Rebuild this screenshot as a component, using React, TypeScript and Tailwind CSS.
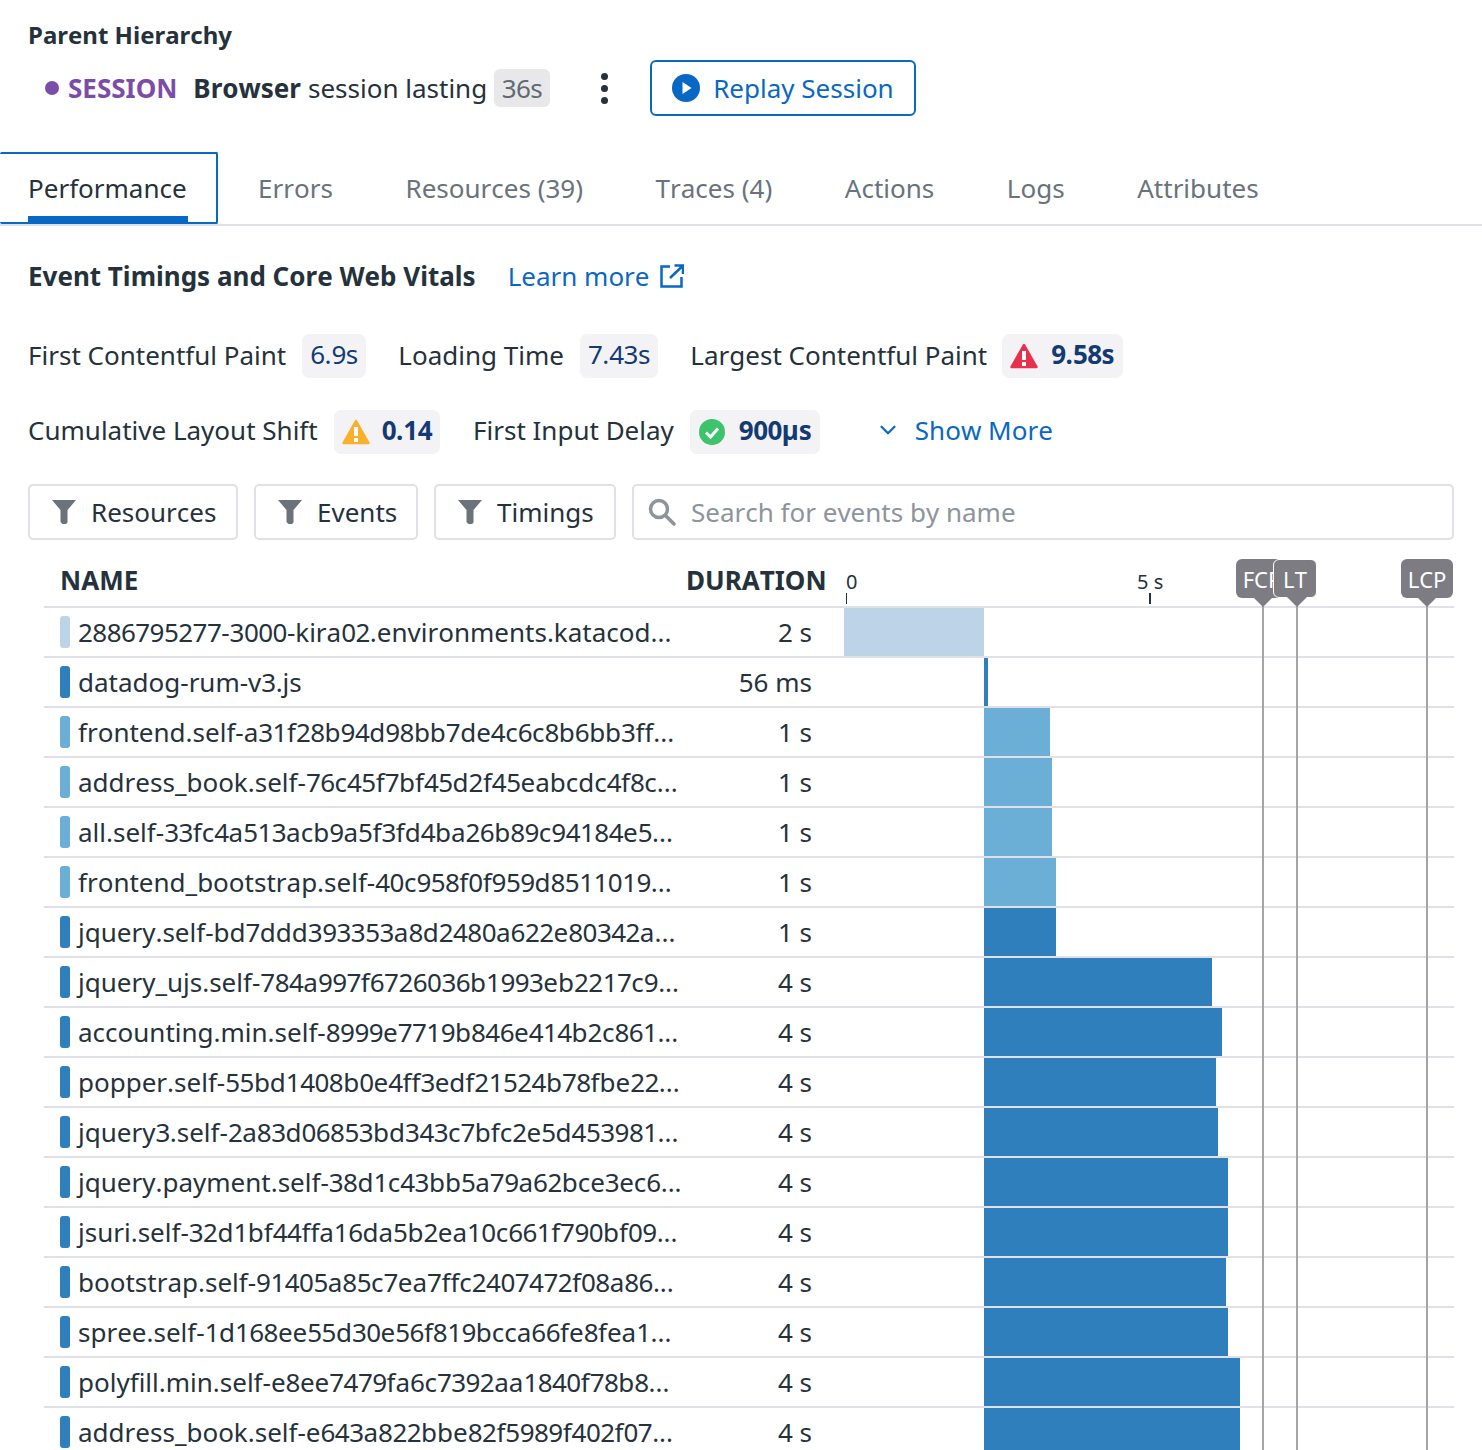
import React from "react";
import { ChevronDown } from "lucide-react";

const rows = [
  { name: "2886795277-3000-kira02.environments.katacod...", dur: "2 s", color: "#bdd4e8", start: 0, width: 140 },
  { name: "datadog-rum-v3.js", dur: "56 ms", color: "#2f7fbd", start: 140, width: 4 },
  { name: "frontend.self-a31f28b94d98bb7de4c6c8b6bb3ff...", dur: "1 s", color: "#6baed6", start: 140, width: 66 },
  { name: "address_book.self-76c45f7bf45d2f45eabcdc4f8c...", dur: "1 s", color: "#6baed6", start: 140, width: 68 },
  { name: "all.self-33fc4a513acb9a5f3fd4ba26b89c94184e5...", dur: "1 s", color: "#6baed6", start: 140, width: 68 },
  { name: "frontend_bootstrap.self-40c958f0f959d8511019...", dur: "1 s", color: "#6baed6", start: 140, width: 72 },
  { name: "jquery.self-bd7ddd393353a8d2480a622e80342a...", dur: "1 s", color: "#2f7fbd", start: 140, width: 72 },
  { name: "jquery_ujs.self-784a997f6726036b1993eb2217c9...", dur: "4 s", color: "#2f7fbd", start: 140, width: 228 },
  { name: "accounting.min.self-8999e7719b846e414b2c861...", dur: "4 s", color: "#2f7fbd", start: 140, width: 238 },
  { name: "popper.self-55bd1408b0e4ff3edf21524b78fbe22...", dur: "4 s", color: "#2f7fbd", start: 140, width: 232 },
  { name: "jquery3.self-2a83d06853bd343c7bfc2e5d453981...", dur: "4 s", color: "#2f7fbd", start: 140, width: 234 },
  { name: "jquery.payment.self-38d1c43bb5a79a62bce3ec6...", dur: "4 s", color: "#2f7fbd", start: 140, width: 244 },
  { name: "jsuri.self-32d1bf44ffa16da5b2ea10c661f790bf09...", dur: "4 s", color: "#2f7fbd", start: 140, width: 244 },
  { name: "bootstrap.self-91405a85c7ea7ffc2407472f08a86...", dur: "4 s", color: "#2f7fbd", start: 140, width: 242 },
  { name: "spree.self-1d168ee55d30e56f819bcca66fe8fea1...", dur: "4 s", color: "#2f7fbd", start: 140, width: 244 },
  { name: "polyfill.min.self-e8ee7479fa6c7392aa1840f78b8...", dur: "4 s", color: "#2f7fbd", start: 140, width: 256 },
  { name: "address_book.self-e643a822bbe82f5989f402f07...", dur: "4 s", color: "#2f7fbd", start: 140, width: 256 },
];

const tabs = ["Errors", "Resources (39)", "Traces (4)", "Actions", "Logs", "Attributes"];

// timeline markers, x is relative to the chart column. LT sits on top of FCP with a white edge
const markers = [
  { label: "FCP", x: 418, left: 392, width: 52, edge: "" },
  { label: "LT", x: 452, left: 429, width: 44, edge: "border border-white" },
  { label: "LCP", x: 582, left: 557, width: 52, edge: "" },
];

// digits in the reference run a little narrower than the installed Noto Sans
function Digits({ text }: { text: string }) {
  return (
    <>
      {text.split(/(\d+)/).map((part, i) =>
        /\d/.test(part) ? (
          <span key={i} className="tracking-[-0.55px]">{part}</span>
        ) : (
          <span key={i}>{part}</span>
        )
      )}
    </>
  );
}

function Funnel() {
  return (
    <svg width="24" height="24" viewBox="0 0 24 24" className="shrink-0">
      <path d="M0 0h24l-8.500 10v12.500l-1.500 1.500h-3.500l-2-2V10z" fill="#6b7279" />
    </svg>
  );
}

function FilterButton({ label, width }: { label: string; width: string }) {
  return (
    <button className={`flex h-[56px] ${width} items-center gap-[15px] rounded-[5px] border-2 border-[#e0e0e6] pl-[22px] text-[26px] text-[#25323c]`}>
      <Funnel />
      {label}
    </button>
  );
}

function Pill({ children }: { children: React.ReactNode }) {
  return (
    <span className="flex h-[44px] items-center gap-[13px] rounded-[7px] bg-[#f3f3f5] px-[8px] text-[26px] text-[#133a74]">
      {children}
    </span>
  );
}

function Triangle({ color }: { color: string }) {
  return (
    <svg width="28" height="26" viewBox="0 0 28 26">
      <path d="M14 2l12.500 22h-25z" fill={color} stroke={color} strokeWidth="2.500" strokeLinejoin="round" />
      <rect x="12" y="8" width="4" height="9" fill="#fff" />
      <rect x="12" y="19" width="4" height="4" fill="#fff" />
    </svg>
  );
}

export default function App() {
  return (
    <div className="h-[1450px] w-[1482px] overflow-hidden bg-white font-['Noto_Sans',sans-serif] text-[#25323c] [font-kerning:none]">
      <div className="pl-[28px] pt-[18px]">
        <h2 className="text-[24px] leading-[33px] font-bold">Parent Hierarchy</h2>
        <div className="mt-[9px] flex h-[56px] items-center pl-[17px]">
          <span className="h-[14px] w-[14px] rounded-full bg-[#7b4ca8]" />
          <span className="ml-[9px] text-[26px] font-bold text-[#7b4ca8]">SESSION</span>
          <span className="ml-[16px] text-[26px] font-bold">Browser</span>
          <span className="ml-[7px] text-[26px]">session lasting</span>
          <span className="ml-[7px] flex h-[38px] w-[56px] items-center justify-center rounded-[6px] bg-[#e8e8eb] text-[26px] text-[#5f6a73]"><Digits text="36s" /></span>
          <span className="ml-[51px] flex flex-col gap-[5px]">
            <i className="h-[7px] w-[7px] rounded-full bg-[#25323c]" />
            <i className="h-[7px] w-[7px] rounded-full bg-[#25323c]" />
            <i className="h-[7px] w-[7px] rounded-full bg-[#25323c]" />
          </span>
          <button className="ml-[42px] flex h-[56px] w-[266px] items-center gap-[13px] rounded-[6px] border-2 border-[#0968c3] pl-[20px] text-[26px] text-[#0968c3]">
            <svg width="28" height="28" viewBox="0 0 28 28">
              <circle cx="14" cy="14" r="14" fill="#0968c3" />
              <path d="M10.500 8l9 6-9 6z" fill="#fff" />
            </svg>
            Replay Session
          </button>
        </div>
      </div>

      <div className="mt-[36px] flex h-[74px] border-b-2 border-[#e0e0e6]">
        <div className="flex h-[72px] w-[218px] flex-col rounded-[2px] border-2 border-[#0968c3] border-l-0 pl-[28px]">
          <span className="mt-[16px] text-[26px] leading-[36px]">Performance</span>
          <span className="mt-auto h-[6px] w-[160px] bg-[#0968c3]" />
        </div>
        <div className="ml-[40px] flex gap-[72.6px] pt-[18px] text-[26px] leading-[36px] text-[#68737c]">
          {tabs.map((t) => (
            <span key={t}>{t}</span>
          ))}
        </div>
      </div>

      <div className="px-[28px]">
        <div className="mt-[32px] flex items-center">
          <h3 className="text-[26px] leading-[36px] font-bold">Event Timings and Core Web Vitals</h3>
          <a className="ml-[32px] flex items-center gap-[10px] text-[26px] leading-[36px] text-[#0968c3]">
            Learn more
            <svg width="24" height="24" viewBox="0 0 24 24" fill="none" stroke="#0968c3" strokeWidth="2.500">
              <path d="M10 2.500H1.500v20h20V13" />
              <path d="M10 14L22 2.500M14.500 1.500h8.500V10" />
            </svg>
          </a>
        </div>

        <div className="mt-[40px] flex items-center text-[26px]">
          <span className="-mt-[1px]">First Contentful Paint</span>
          <span className="ml-[16px]"><Pill><span className="-mt-[3px]"><Digits text="6.9s" /></span></Pill></span>
          <span className="-mt-[1px] ml-[32px]">Loading Time</span>
          <span className="ml-[16px]"><Pill><span className="-mt-[3px]"><Digits text="7.43s" /></span></Pill></span>
          <span className="-mt-[1px] ml-[32px]">Largest Contentful Paint</span>
          <span className="ml-[15px]">
            <Pill><Triangle color="#e8304f" /><b className="-mt-[3px] font-bold"><Digits text="9.58s" /></b></Pill>
          </span>
        </div>

        <div className="mt-[32px] flex items-center text-[26px]">
          <span className="-mt-[4px]">Cumulative Layout Shift</span>
          <span className="ml-[16px]">
            <Pill><Triangle color="#fbb02c" /><b className="-mt-[3px] -ml-[1px] font-bold"><Digits text="0.14" /></b></Pill>
          </span>
          <span className="-mt-[4px] ml-[33px]">First Input Delay</span>
          <span className="ml-[16px]">
            <Pill>
              <svg width="28" height="28" viewBox="0 0 28 28">
                <circle cx="14" cy="14" r="13" fill="#3cc36b" />
                <path d="M8 14.500l4.500 4.500L20 10.500" fill="none" stroke="#fff" strokeWidth="3" />
              </svg>
              <b className="-mt-[3px] font-bold"><Digits text="900µs" /></b>
            </Pill>
          </span>
          <span className="-mt-[4px] ml-[55px] flex items-center gap-[14px] text-[#0968c3]">
            <ChevronDown size={26} strokeWidth={2} />
            Show More
          </span>
        </div>

        <div className="mt-[30px] flex gap-[16px]">
          <FilterButton label="Resources" width="w-[210px]" />
          <FilterButton label="Events" width="w-[164px]" />
          <FilterButton label="Timings" width="w-[182px]" />
          <div className="flex h-[56px] w-[822px] items-center rounded-[5px] border-2 border-[#e0e0e6] pl-[14px] text-[26px] text-[#8d949b]">
            <svg width="30" height="28" viewBox="0 0 30 28" fill="none" stroke="#8d949b" strokeWidth="3.500">
              <circle cx="11" cy="11" r="8.500" />
              <path d="M18 18l8 8" strokeLinecap="round" />
            </svg>
            <span className="ml-[13px]">Search for events by name</span>
          </div>
        </div>
      </div>

      <div className="relative ml-[44px] mt-[16px] w-[1410px]">
        <div className="flex h-[52px] items-center border-b-2 border-[#e0e0e6] pl-[16px] text-[26px] font-bold">
          <span className="-mt-[2px] w-[626px]">NAME</span>
          <span className="-mt-[2px] w-[158px] whitespace-nowrap">DURATION</span>
          <div className="relative h-full flex-1 font-normal">
            <span className="absolute left-[2px] top-[12px] text-[20px] leading-[28px]">0</span>
            <i className="absolute bottom-[2px] left-[2px] h-[11px] w-[1px] bg-[#25323c]" />
            <span className="absolute left-[293px] top-[12px] text-[20px] leading-[28px]">5 s</span>
            <i className="absolute bottom-[2px] left-[305px] h-[11px] w-[2px] bg-[#25323c]" />
          </div>
        </div>

        {rows.map((r) => (
          <div key={r.name} className="flex h-[50px] items-stretch border-b-2 border-[#e0e0e6] text-[26px]">
            <div className="flex w-[640px] items-center pl-[16px]">
              <span className="h-[32px] w-[10px] shrink-0 rounded-[3px]" style={{ backgroundColor: r.color }} />
              <span className="ml-[8px] whitespace-nowrap"><Digits text={r.name} /></span>
            </div>
            <div className="flex w-[128px] items-center justify-end">{r.dur}</div>
            <div className="ml-[32px] flex-1">
              <div className="h-full" style={{ marginLeft: r.start, width: r.width, backgroundColor: r.color }} />
            </div>
          </div>
        ))}

        {markers.map((m) => (
          <i key={m.label} className="absolute bottom-0 top-[50px] w-[2px] bg-[#a5a5a8]" style={{ left: 800 + m.x }} />
        ))}
        {markers.map((m) => (
          <div
            key={m.label}
            className={`absolute top-[3px] flex h-[39px] items-center justify-center rounded-[6px] bg-[#7d7c82] pt-[2px] text-[22px] text-white ${m.edge}`}
            style={{ left: 800 + m.left, width: m.width }}
          >
            {m.label}
          </div>
        ))}
        {markers.map((m) => (
          <i
            key={m.label}
            className="absolute top-[41px] h-0 w-0 border-x-[10px] border-t-[10px] border-x-transparent border-t-[#7d7c82]"
            style={{ left: 791 + m.x }}
          />
        ))}
      </div>
    </div>
  );
}
